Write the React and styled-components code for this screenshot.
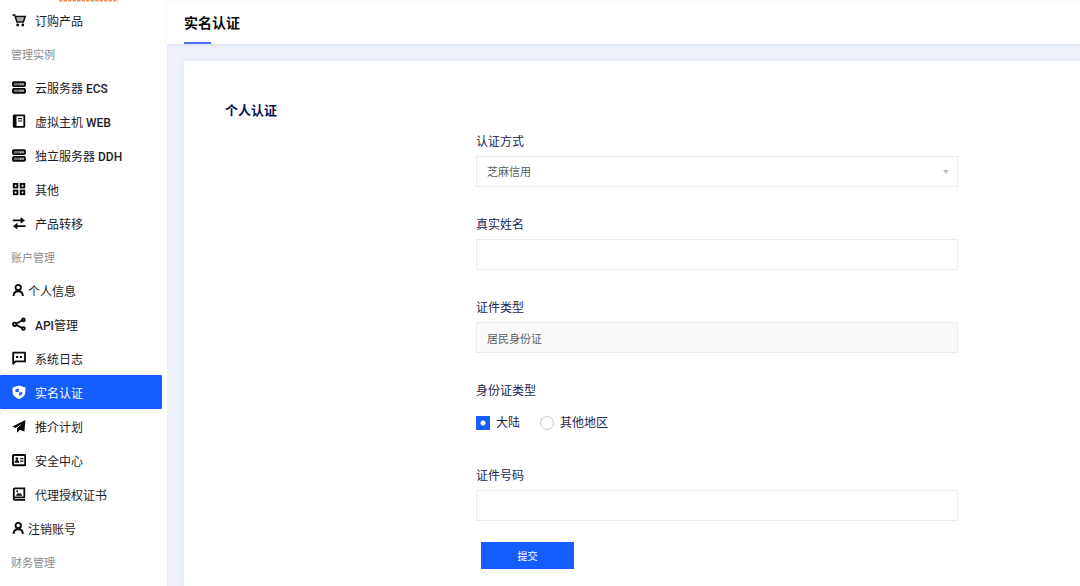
import React from "react"
import styled, { createGlobalStyle } from "styled-components"

const GlobalStyle = createGlobalStyle`
  * {
    box-sizing: border-box;
  }

  body {
    margin: 0;
    background: #eef1fa;
    color: #1d1d1f;
    font-family: Roboto, "Noto Sans CJK SC", sans-serif;
    font-size: 12px;
  }
`

const Page = styled.div`
  display: flex;
  align-items: stretch;
  min-height: 100vh;
`

const Sidebar = styled.nav`
  flex: none;
  width: 167px;
  padding-right: 5px;
  background: #ffffff;
  overflow: hidden;
`

const Slogan = styled.svg`
  display: block;
  height: 3px;
  margin-left: 59px;
`

const Group = styled.h3`
  margin: 0;
  padding: 4px 0 0 11px;
  color: #8c8c8c;
  font-size: 11px;
  font-weight: 400;
  line-height: 29px;
`

const Item = styled.a`
  display: flex;
  align-items: center;
  gap: ${props => (props.$compact ? "4px" : "9px")};
  height: 34px;
  padding-left: 12px;
  border-radius: 1px;
  background: ${props => (props.$active ? "#155dff" : "transparent")};
  color: ${props => (props.$active ? "#ffffff" : "#1d1d1f")};
  text-decoration: none;

  svg {
    flex: none;
    color: ${props => (props.$active ? "#ffffff" : "#0a0a0a")};
  }

  b {
    font-weight: 500;
  }
`

const Main = styled.main`
  display: flex;
  flex: 1;
  flex-direction: column;
  min-width: 0;
`

const Header = styled.header`
  margin-bottom: 17px;
  padding: 0 17px;
  border-top: 3px solid #fafafa;
  background: #ffffff;
  box-shadow: 0 1px 3px rgba(80, 100, 180, 0.12);
`

const PageTitle = styled.h1`
  margin: 0;
  color: #0a0a0a;
  font-size: 14px;
  font-weight: 700;
  line-height: 41px;

  &::after {
    content: "";
    display: block;
    width: 27px;
    height: 2px;
    margin-top: -2px;
    background: #4a74fb;
  }
`

const Card = styled.section`
  flex: 1;
  margin-left: 17px;
  padding: 40px 41px 17px;
  background: #ffffff;
  box-shadow: 0 0 10px rgba(80, 100, 180, 0.08);
`

const CardTitle = styled.h2`
  margin: 0;
  color: #0c1450;
  font-size: 13px;
  font-weight: 700;
  line-height: 20px;
`

const FormGrid = styled.div`
  display: grid;
  grid-template-columns: 251fr 482fr 81fr;
  padding-top: 11px;
`

const Form = styled.form`
  grid-column: 2;
`

const Field = styled.div`
  display: flex;
  flex-direction: column;
  gap: 4px;
  margin-bottom: ${props => (props.$last ? "21px" : "28px")};
`

const Label = styled.label`
  color: #1c2553;
  line-height: 20px;
`

const control = `
  display: block;
  width: 100%;
  height: 31px;
  padding: 1px 10px 0;
  border: 1px solid #e9ecf5;
  border-radius: 0;
  outline: none;
  background: #ffffff;
  color: #5b5f66;
  font-family: inherit;
  font-size: 11px;
`

const Input = styled.input`
  ${control}

  &:read-only {
    background: #fafafa;
  }
`

const SelectBox = styled.div`
  position: relative;

  &::after {
    content: "";
    position: absolute;
    top: 14px;
    right: 9px;
    border: 3px solid transparent;
    border-top: 4px solid #b8bcc4;
    border-bottom: 0;
    pointer-events: none;
  }
`

const Select = styled.select`
  ${control}
  appearance: none;
`

const RadioField = styled.fieldset`
  min-width: 0;
  margin: 0 0 33px;
  padding: 0;
  border: 0;
`

const Legend = styled.legend`
  padding: 0;
  color: #1c2553;
  line-height: 20px;
`

const RadioRow = styled.div`
  display: flex;
  gap: 20px;
  padding-top: 12px;
`

const RadioLabel = styled.label`
  display: flex;
  align-items: center;
  gap: 6px;
  color: #1c2553;
  line-height: 20px;
`

const Radio = styled.input`
  appearance: none;
  width: 14px;
  height: 14px;
  margin: 0;
  border: 1px solid #c9ccd3;
  border-radius: 50%;
  background: #ffffff;

  &:checked {
    border: 0;
    border-radius: 0;
    background: radial-gradient(circle, #ffffff 2px, #155dff 3px);
  }
`

const Submit = styled.button`
  width: 93px;
  height: 27px;
  margin-left: 5px;
  padding: 0;
  border: 0;
  background: #155dff;
  color: #ffffff;
  font-family: inherit;
  font-size: 10px;
`

const Icon = ({ size = 14, box = 14, children }) => (
  <svg
    width={size}
    height={14}
    viewBox={`0 0 ${box} 14`}
    fill="none"
    stroke="currentColor"
    aria-hidden="true"
  >
    {children}
  </svg>
)

const icons = {
  cart: (
    <Icon>
      <path d="M0.4 1.9H2.7L4.9 8.9H11.3L13.2 3.5H4" strokeWidth="1.5" />
      <path d="M3.8 4.6H12.4L11.2 8.2H4.8Z" fill="currentColor" fillOpacity="0.35" stroke="none" />
      <circle cx="5.7" cy="12" r="1.4" fill="currentColor" stroke="none" />
      <circle cx="10.8" cy="12" r="1.4" fill="currentColor" stroke="none" />
    </Icon>
  ),
  server: (
    <Icon>
      <rect x="1" y="2.3" width="12" height="3.8" rx="0.8" strokeWidth="1.9" />
      <rect x="1" y="8.9" width="12" height="3.8" rx="0.8" strokeWidth="1.9" />
      <path d="M2 4.2H12M2 10.8H12" strokeOpacity="0.6" strokeWidth="2" />
      <path d="M8 4.2H9.2M10.4 4.2H11.6M8 10.8H9.2M10.4 10.8H11.6" stroke="#fff" strokeWidth="1" />
    </Icon>
  ),
  host: (
    <Icon>
      <rect x="1.7" y="1.4" width="10.6" height="11.4" rx="0.4" strokeWidth="1.8" />
      <path d="M3.1 1V13.4" strokeWidth="2.8" />
      <path d="M6 4.6H10.2M6 7H10.2" strokeWidth="1.1" />
    </Icon>
  ),
  grid: (
    <Icon>
      <g strokeWidth="1.9">
        <rect x="1.8" y="1.9" width="3.6" height="3.6" />
        <rect x="8.7" y="1.9" width="3.6" height="3.6" />
        <rect x="1.8" y="8.6" width="3.6" height="3.6" />
        <rect x="8.7" y="8.6" width="3.6" height="3.6" />
      </g>
    </Icon>
  ),
  transfer: (
    <Icon>
      <path d="M0.8 4.4H10M13.6 10.2H4" strokeWidth="1.8" />
      <path d="M8.6 1L13 4.4L8.6 7.6ZM5.4 6.8L1 10.2L5.4 13.4Z" fill="currentColor" stroke="none" />
    </Icon>
  ),
  user: (
    <Icon size={12} box={12}>
      <circle cx="6.2" cy="4.6" r="2.7" strokeWidth="1.9" />
      <path d="M1.6 13C1.6 9.8 3.3 8.3 6.2 8.3S10.8 9.8 10.8 13" strokeWidth="1.9" />
    </Icon>
  ),
  share: (
    <Icon>
      <path d="M3 7.3L11 3M3 7.3L11 11.4" strokeWidth="1.8" />
      <circle cx="2.7" cy="7.3" r="1.7" fill="#fff" strokeWidth="1.9" />
      <circle cx="11.4" cy="2.9" r="1.4" fill="#fff" strokeWidth="1.9" />
      <circle cx="11.4" cy="11.5" r="1.4" fill="#fff" strokeWidth="1.9" />
    </Icon>
  ),
  message: (
    <Icon>
      <path d="M1.2 12.9V1.7H13V10.4H3.6L1.2 12.9Z" strokeWidth="1.8" strokeLinejoin="round" />
      <path d="M4 6H6.2M7.8 6H10" strokeWidth="2" />
    </Icon>
  ),
  shield: (
    <Icon>
      <path d="M7 0.4L13.4 2.6V6.8C13.4 10.4 10.8 12.8 7 14C3.2 12.8 0.6 10.4 0.6 6.8V2.6Z" fill="currentColor" stroke="none" />
      <path d="M6.8 3.4V6.9H3.4V4.6ZM7.2 7.3H10.6C10.3 9 9 10.2 7.2 11Z" fill="#155dff" stroke="none" />
    </Icon>
  ),
  plane: (
    <Icon>
      <path d="M13.4 0.9L12.4 12.6L8 10.8L5 13.8V9.6L10.4 4.2L3.6 9L0.4 7.4Z" fill="currentColor" stroke="none" />
      <path d="M5 9.8L10.8 3.8L8 10.9Z" fill="currentColor" stroke="none" />
    </Icon>
  ),
  card: (
    <Icon>
      <rect x="1" y="2" width="12.2" height="10.2" rx="0.6" strokeWidth="1.9" />
      <circle cx="4.9" cy="5.6" r="1.4" fill="currentColor" stroke="none" />
      <path d="M2.6 9.7C2.6 7.8 3.4 7 4.9 7S7.2 7.8 7.2 9.7Z" fill="currentColor" stroke="none" />
      <path d="M8.2 5.6H11.4M8.2 8.2H11.4" strokeWidth="1.3" />
    </Icon>
  ),
  certificate: (
    <Icon>
      <path d="M12.3 10V1.3H2.8C2.2 1.3 1.8 1.7 1.8 2.3V11.8C1.8 12.4 2.2 12.9 2.8 12.9H13" strokeWidth="1.8" />
      <path d="M1.8 10.4H13" strokeWidth="1.7" />
      <path d="M3.8 8.8L6 5.8L7.3 7L8.4 6L10.5 8.8Z" fill="currentColor" stroke="none" />
      <circle cx="5.2" cy="4.2" r="1" fill="currentColor" stroke="none" />
    </Icon>
  ),
}

const menu = [
  { icon: "cart", text: "订购产品" },
  { group: "管理实例" },
  { icon: "server", text: "云服务器 ", latin: "ECS" },
  { icon: "host", text: "虚拟主机 ", latin: "WEB" },
  { icon: "server", text: "独立服务器 ", latin: "DDH" },
  { icon: "grid", text: "其他" },
  { icon: "transfer", text: "产品转移" },
  { group: "账户管理" },
  { icon: "user", text: "个人信息", compact: true },
  { icon: "share", prefix: "API", text: "管理" },
  { icon: "message", text: "系统日志" },
  { icon: "shield", text: "实名认证", active: true },
  { icon: "plane", text: "推介计划" },
  { icon: "card", text: "安全中心" },
  { icon: "certificate", text: "代理授权证书" },
  { icon: "user", text: "注销账号", compact: true },
  { group: "财务管理" },
]

function App() {
  return (
    <>
      <GlobalStyle />
      <Page>
        <Sidebar>
          <Slogan width="59" height="3" viewBox="0 0 59 3" aria-hidden="true">
            <path d="M0 0.8H59" stroke="#f0905f" strokeWidth="1.6" strokeDasharray="3.5 1" />
          </Slogan>
          {menu.map(entry =>
            entry.group ? (
              <Group key={entry.group}>{entry.group}</Group>
            ) : (
              <Item
                key={entry.text}
                href="#"
                $active={entry.active}
                $compact={entry.compact}
              >
                {icons[entry.icon]}
                <span>
                  {entry.prefix && <b>{entry.prefix}</b>}
                  {entry.text}
                  {entry.latin && <b>{entry.latin}</b>}
                </span>
              </Item>
            )
          )}
        </Sidebar>
        <Main>
          <Header>
            <PageTitle>实名认证</PageTitle>
          </Header>
          <Card>
            <CardTitle>个人认证</CardTitle>
            <FormGrid>
              <Form onSubmit={e => e.preventDefault()}>
                <Field>
                  <Label htmlFor="method">认证方式</Label>
                  <SelectBox>
                    <Select id="method">
                      <option>芝麻信用</option>
                    </Select>
                  </SelectBox>
                </Field>
                <Field>
                  <Label htmlFor="name">真实姓名</Label>
                  <Input id="name" type="text" />
                </Field>
                <Field>
                  <Label htmlFor="cardType">证件类型</Label>
                  <Input id="cardType" type="text" value="居民身份证" readOnly />
                </Field>
                <RadioField>
                  <Legend>身份证类型</Legend>
                  <RadioRow>
                    <RadioLabel>
                      <Radio type="radio" name="region" defaultChecked />
                      大陆
                    </RadioLabel>
                    <RadioLabel>
                      <Radio type="radio" name="region" />
                      其他地区
                    </RadioLabel>
                  </RadioRow>
                </RadioField>
                <Field $last>
                  <Label htmlFor="cardNo">证件号码</Label>
                  <Input id="cardNo" type="text" />
                </Field>
                <Submit type="submit">提交</Submit>
              </Form>
            </FormGrid>
          </Card>
        </Main>
      </Page>
    </>
  )
}

export default App
